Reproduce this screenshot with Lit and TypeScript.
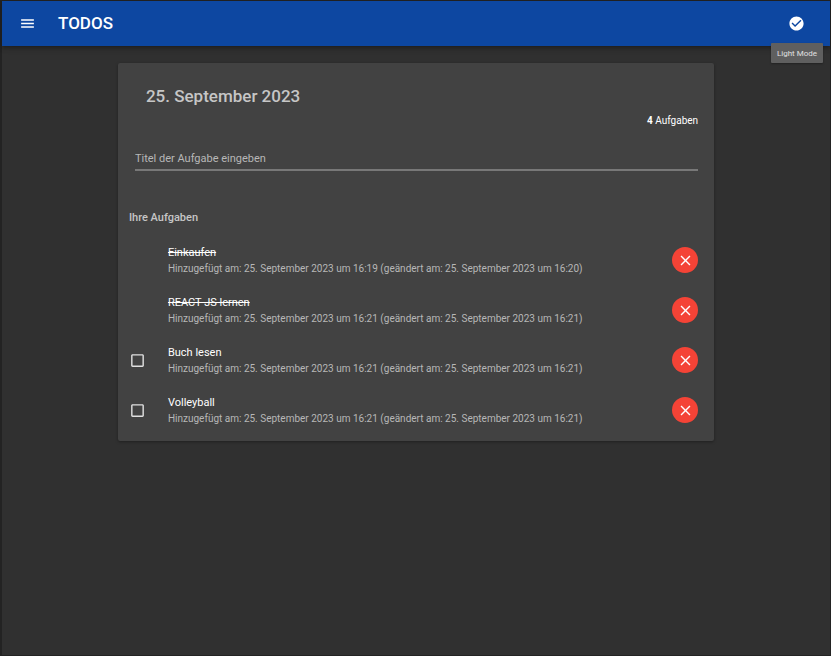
import { LitElement, html, css, svg, nothing } from "lit";
import { customElement, property, state } from "lit/decorators.js";

interface Todo {
  id: number;
  title: string;
  added: string;
  changed: string;
  done: boolean;
}

const icon = (d: string) => html`
  <svg class="icon" viewBox="0 0 24 24" aria-hidden="true">${svg`<path d=${d}></path>`}</svg>
`;

const MENU = "M3 18h18v-2H3v2zm0-5h18v-2H3v2zm0-7v2h18V6H3z";
const CHECK_CIRCLE =
  "M12 2C6.48 2 2 6.48 2 12s4.48 10 10 10 10-4.48 10-10S17.52 2 12 2zm-2 15l-5-5 1.41-1.41L10 14.17l7.59-7.59L19 8l-9 9z";
const CLOSE =
  "M19 6.41L17.59 5 12 10.59 6.41 5 5 6.41 10.59 12 5 17.59 6.41 19 12 13.41 17.59 19 19 17.59 13.41 12z";
const BOX =
  "M19 5v14H5V5h14m0-2H5c-1.1 0-2 .9-2 2v14c0 1.1.9 2 2 2h14c1.1 0 2-.9 2-2V5c0-1.1-.9-2-2-2z";

const shared = css`
  * {
    box-sizing: border-box;
  }
  .icon {
    display: block;
    width: 17px;
    height: 17px;
    fill: currentColor;
  }
  button {
    display: flex;
    align-items: center;
    justify-content: center;
    border: 0;
    padding: 0;
    color: #fff;
    background: none;
    cursor: pointer;
  }
`;

@customElement("todo-item")
export class TodoItem extends LitElement {
  @property({ attribute: false }) todo!: Todo;

  static styles = [
    shared,
    css`
      :host {
        display: flex;
        align-items: center;
        height: 50px;
        padding: 0 16px 0 11px;
      }
      .tick {
        flex: none;
        width: 39px;
      }
      .tick label {
        display: block;
        position: relative;
        width: 17px;
        height: 17px;
        color: #e0e0e0;
      }
      .tick input {
        position: absolute;
        inset: 0;
        width: 100%;
        height: 100%;
        margin: 0;
        opacity: 0;
        cursor: pointer;
      }
      .text {
        flex: 1;
        min-width: 0;
        padding-top: 2px;
        line-height: 16px;
      }
      .title {
        font-size: 11px;
        color: #fff;
      }
      .done {
        text-decoration: line-through;
      }
      .dates {
        font-size: 10px;
        color: #b7b7b7;
      }
      .delete {
        flex: none;
        width: 26px;
        height: 26px;
        border-radius: 50%;
        background: #f44336;
      }
    `,
  ];

  private emit(name: string) {
    this.dispatchEvent(new CustomEvent(name, { detail: this.todo.id }));
  }

  render() {
    const { title, added, changed, done } = this.todo;
    return html`
      <div class="tick">
        ${done
          ? nothing
          : html`<label>
              <input type="checkbox" aria-label=${title} @change=${() => this.emit("complete")} />
              ${icon(BOX)}
            </label>`}
      </div>
      <div class="text">
        <div class="title ${done ? "done" : ""}">${title}</div>
        <div class="dates">Hinzugefügt am: ${added} (geändert am: ${changed})</div>
      </div>
      <button class="delete" aria-label="Löschen" @click=${() => this.emit("remove")}>
        ${icon(CLOSE)}
      </button>
    `;
  }
}

@customElement("app-root")
export class AppRoot extends LitElement {
  @state() private todos: Todo[] = [
    { id: 1, title: "Einkaufen", added: "25. September 2023 um 16:19", changed: "25. September 2023 um 16:20", done: true },
    { id: 2, title: "REACT JS lernen", added: "25. September 2023 um 16:21", changed: "25. September 2023 um 16:21", done: true },
    { id: 3, title: "Buch lesen", added: "25. September 2023 um 16:21", changed: "25. September 2023 um 16:21", done: false },
    { id: 4, title: "Volleyball", added: "25. September 2023 um 16:21", changed: "25. September 2023 um 16:21", done: false },
  ];

  static styles = [
    shared,
    css`
      :host {
        display: block;
        box-sizing: border-box;
        min-height: 100vh;
        border: 1px solid #232323;
        border-left-width: 2px;
        background: #303030;
        color: #fff;
        font-family: Roboto, "Liberation Sans", sans-serif;
      }
      .bar {
        position: relative;
        display: flex;
        align-items: center;
        height: 45px;
        padding: 0 17px;
        background: #0d47a1;
        box-shadow: 0 2px 3px -1px rgba(0, 0, 0, 0.2), 0 3px 4px rgba(0, 0, 0, 0.14),
          0 1px 8px rgba(0, 0, 0, 0.12);
      }
      .bar h1 {
        flex: 1;
        margin: 0 0 0 22px;
        font-size: 17px;
        font-weight: 500;
        line-height: 23px;
      }
      .mode {
        width: 33px;
        height: 33px;
      }
      .tooltip {
        position: absolute;
        top: 42px;
        right: 7px;
        padding: 5px 6px 3px;
        border-radius: 1px;
        background: #5f5f5f;
        box-shadow: 0 1px 2px rgba(0, 0, 0, 0.3);
        color: #e0e0e0;
        font-size: 8px;
        line-height: 12px;
        white-space: nowrap;
      }
      .card {
        width: 72%;
        margin: 17px auto 0;
        padding: 21px 0 6px;
        border-radius: 2px;
        background: #424242;
        box-shadow: 0 1px 3px rgba(0, 0, 0, 0.35);
      }
      .date {
        margin: 0 28px;
        font-size: 17px;
        font-weight: 500;
        line-height: 24px;
        color: #c6c6c6;
      }
      .count {
        margin: 5px 16px 0;
        font-size: 10px;
        line-height: 16px;
        text-align: right;
      }
      .field {
        display: block;
        margin: 20px 16px 0 17px;
      }
      .field input {
        display: block;
        width: 100%;
        height: 22px;
        padding: 0 0 2px;
        border: 0;
        border-bottom: 2px solid #787878;
        border-radius: 0;
        outline: 0;
        background: none;
        color: #fff;
        font: 11px/16px Roboto, "Liberation Sans", sans-serif;
      }
      .field input::placeholder {
        color: #b7b7b7;
        opacity: 1;
      }
      .heading {
        margin: 39px 11px 9px;
        font-size: 11px;
        font-weight: 500;
        line-height: 16px;
        color: #c6c6c6;
      }
      ul {
        margin: 0;
        padding: 0;
        list-style: none;
      }
    `,
  ];

  private complete(id: number) {
    this.todos = this.todos.map((t) => (t.id === id ? { ...t, done: true } : t));
  }

  private remove(id: number) {
    this.todos = this.todos.filter((t) => t.id !== id);
  }

  render() {
    return html`
      <header class="bar">
        <button aria-label="Menü">${icon(MENU)}</button>
        <h1>TODOS</h1>
        <button class="mode" aria-describedby="mode-tip" aria-label="Light Mode">${icon(CHECK_CIRCLE)}</button>
        <div class="tooltip" id="mode-tip" role="tooltip">Light Mode</div>
      </header>
      <main class="card">
        <h2 class="date">25. September 2023</h2>
        <div class="count"><b>${this.todos.length}</b> Aufgaben</div>
        <div class="field">
          <input type="text" aria-label="Titel der Aufgabe eingeben" placeholder="Titel der Aufgabe eingeben" />
        </div>
        <h3 class="heading">Ihre Aufgaben</h3>
        <ul>
          ${this.todos.map(
            (t) => html`<li>
              <todo-item
                .todo=${t}
                @complete=${(e: CustomEvent<number>) => this.complete(e.detail)}
                @remove=${(e: CustomEvent<number>) => this.remove(e.detail)}
              ></todo-item>
            </li>`,
          )}
        </ul>
      </main>
    `;
  }
}
